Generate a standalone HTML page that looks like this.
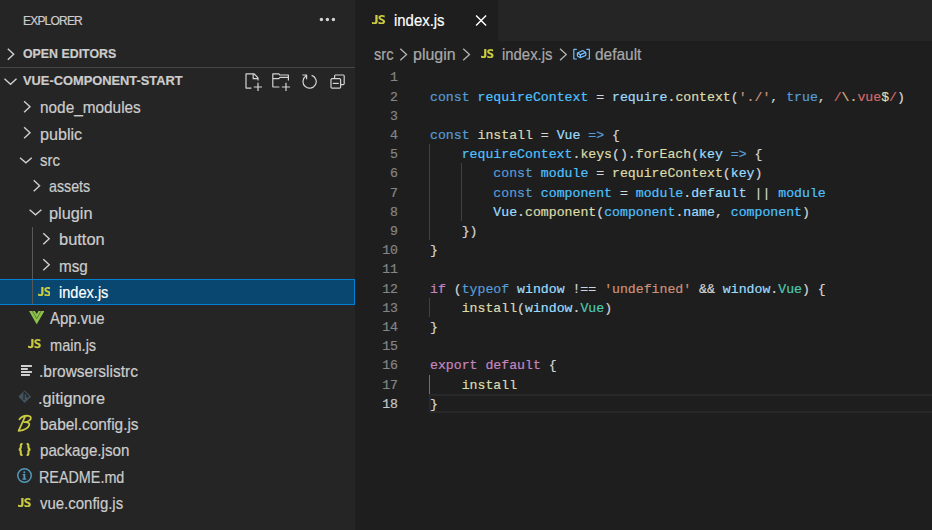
<!DOCTYPE html>
<html><head><meta charset="utf-8">
<style>
*{margin:0;padding:0;box-sizing:border-box}
html,body{width:932px;height:530px;overflow:hidden;background:#1e1e1e}
body{position:relative;font-family:"Liberation Sans",sans-serif;color:#cccccc;-webkit-text-stroke:0.2px currentColor}
.abs{position:absolute}
#side{position:absolute;left:0;top:0;width:355px;height:530px;background:#252526}
.row{position:absolute;left:0;width:355px;height:26.4px;line-height:26.4px;font-size:16.2px;color:#cccccc;white-space:nowrap}
.row .t{position:absolute;top:-0.7px}
.chev{position:absolute;width:19.2px;height:19.2px}
.hdr{position:absolute;left:0;width:355px;height:26.4px;line-height:26.4px;font-size:13.6px;font-weight:bold;color:#cccccc;white-space:nowrap}
svg{display:block}
#editor{position:absolute;left:355px;top:0;width:577px;height:530px;background:#1e1e1e}
#tabs{position:absolute;left:0;top:0;width:577px;height:41px;background:#252526}
#tab{position:absolute;left:0;top:0;width:143px;height:41px;background:#1e1e1e}
.code{position:absolute;left:0;top:0;font-family:"Liberation Mono",monospace;font-size:13.2px;white-space:pre}
.ln{position:absolute;height:19.2px;line-height:19.2px;font-family:"Liberation Mono",monospace;font-size:13.2px;color:#858585;text-align:right;width:43px;left:0}
.cl{position:absolute;left:75px;height:19.2px;line-height:19.2px;font-family:"Liberation Mono",monospace;font-size:13.2px;color:#d4d4d4;white-space:pre}
.k{color:#569cd6}.c{color:#4fc1ff}.f{color:#dcdcaa}.v{color:#9cdcfe}.s{color:#ce9178}.r{color:#d16969}.e{color:#d7ba7d}.ty{color:#4ec9b0}.p{color:#c586c0}
.js{position:absolute;font-weight:bold;color:#cbcb41;font-size:11.5px;letter-spacing:-0.6px;line-height:12px}
</style></head>
<body>
<div id="side">
  <div class="abs" style="left:23px;top:13px;font-size:12px;letter-spacing:-0.8px;line-height:16px;color:#cccccc">EXPLORER</div>
  <svg class="abs" style="left:316px;top:14px" width="22" height="11" viewBox="0 0 22 11"><circle cx="5.4" cy="5.5" r="1.7" fill="#d4d4d4"/><circle cx="11.4" cy="5.5" r="1.7" fill="#d4d4d4"/><circle cx="17.4" cy="5.5" r="1.7" fill="#d4d4d4"/></svg>

  <div class="hdr" style="top:42px">
    <svg class="abs" style="left:0;top:0;overflow:visible" width="1" height="1"><polyline fill="none" stroke="#d0d0d0" stroke-width="1.4" points="7.80,6.80 13.70,12.30 7.80,17.80"/></svg>
    <span class="abs" style="left:22.7px;top:-0.6px;transform-origin:0 50%;transform:scaleX(0.9093)">OPEN EDITORS</span>
  </div>
  <div class="abs" style="left:0;top:67px;width:355px;height:1px;background:#464646"></div>
  <div class="hdr" style="top:68.4px">
    <svg class="abs" style="left:0;top:0;overflow:visible" width="1" height="1"><polyline fill="none" stroke="#d0d0d0" stroke-width="1.4" points="4.50,10.80 10.50,16.20 16.50,10.80"/></svg>
    <span class="abs" style="left:23.0px;top:-0.2px;transform-origin:0 50%;transform:scaleX(0.9450)">VUE-COMPONENT-START</span>
    <svg class="abs" style="left:243px;top:3.6px" width="19.2" height="19.2" viewBox="0 0 16 16"><path fill="#d4d4d4" d="M9.5 1.1l3.4 3.5.1.4v2h-1V6H8V2H3v11h4v1H2.5l-.5-.5v-12l.5-.5h6.7l.3.1zM9 2v3h2.9L9 2zm4 14h-1v-3H9v-1h3V9h1v3h3v1h-3v3z"/></svg>
    <svg class="abs" style="left:271px;top:3.6px" width="19.2" height="19.2" viewBox="0 0 16 16"><path fill="#d4d4d4" d="M14.5 2H7.71l-.85-.85L6.51 1h-5l-.5.5v11l.5.5H7v-1H1.99V6h4.49l.35-.15.86-.86H14v1.5l-.001.51h1.011V2.5L14.5 2zm-.51 2h-6.5l-.35.15-.86.86H2v-3h4.29l.85.85.36.15H14l-.01.99zM13 16h-1v-3H9v-1h3V9h1v3h3v1h-3v3z"/></svg>
    <svg class="abs" style="left:299.8px;top:3.6px" width="19.2" height="19.2" viewBox="0 0 16 16"><path fill="#d4d4d4" d="M4.681 3H2V2h3.5l.5.5V6H5V4a5 5 0 1 0 4.53-.761l.302-.954A6 6 0 1 1 4.681 3z"/></svg>
    <svg class="abs" style="left:328px;top:3.6px" width="19.2" height="19.2" viewBox="0 0 16 16"><path fill="#d4d4d4" d="M9 9H4v1h5V9z"/><path fill="#d4d4d4" fill-rule="evenodd" d="M5 3l1-1h7l1 1v7l-1 1h-2v2l-1 1H3l-1-1V6l1-1h2V3zm1 2h4l1 1v4h2V3H6v2zm4 1H3v7h7V6z"/></svg>
  </div>

  <!-- tree rows -->
  <div class="row" style="top:94.80px;"><svg class="abs" style="left:0;top:0;overflow:visible" width="1" height="1"><polyline fill="none" stroke="#d0d0d0" stroke-width="1.4" points="24.10,6.20 30.00,11.70 24.10,17.20"/></svg><span class="t" style="left:39.51px;transform-origin:0 50%;transform:scaleX(0.9491);">node_modules</span></div>
<div class="row" style="top:121.20px;"><svg class="abs" style="left:0;top:0;overflow:visible" width="1" height="1"><polyline fill="none" stroke="#d0d0d0" stroke-width="1.4" points="24.10,6.20 30.00,11.70 24.10,17.20"/></svg><span class="t" style="left:39.50px;transform-origin:0 50%;transform:scaleX(0.9976);">public</span></div>
<div class="row" style="top:147.60px;"><svg class="abs" style="left:0;top:0;overflow:visible" width="1" height="1"><polyline fill="none" stroke="#d0d0d0" stroke-width="1.4" points="20.00,9.80 25.90,14.80 31.80,9.80"/></svg><span class="t" style="left:39.52px;transform-origin:0 50%;transform:scaleX(0.9238);">src</span></div>
<div class="row" style="top:174.00px;"><svg class="abs" style="left:0;top:0;overflow:visible" width="1" height="1"><polyline fill="none" stroke="#d0d0d0" stroke-width="1.4" points="33.70,6.20 39.60,11.70 33.70,17.20"/></svg><span class="t" style="left:48.77px;transform-origin:0 50%;transform:scaleX(0.8804);">assets</span></div>
<div class="row" style="top:200.40px;"><svg class="abs" style="left:0;top:0;overflow:visible" width="1" height="1"><polyline fill="none" stroke="#d0d0d0" stroke-width="1.4" points="29.60,9.80 35.50,14.80 41.40,9.80"/></svg><span class="t" style="left:49.40px;transform-origin:0 50%;transform:scaleX(1.0071);">plugin</span></div>
<div class="row" style="top:226.80px;"><svg class="abs" style="left:0;top:0;overflow:visible" width="1" height="1"><polyline fill="none" stroke="#d0d0d0" stroke-width="1.4" points="43.30,6.20 49.20,11.70 43.30,17.20"/></svg><span class="t" style="left:59.10px;transform-origin:0 50%;transform:scaleX(1.0156);">button</span></div>
<div class="row" style="top:253.20px;"><svg class="abs" style="left:0;top:0;overflow:visible" width="1" height="1"><polyline fill="none" stroke="#d0d0d0" stroke-width="1.4" points="43.30,6.20 49.20,11.70 43.30,17.20"/></svg><span class="t" style="left:59.10px;transform-origin:0 50%;transform:scaleX(0.94);">msg</span></div>
<div class="abs" style="left:-1px;top:279px;width:356px;height:26px;background:#094771;border:1px solid #007fd4"></div>
<div class="row" style="top:279.60px;"><svg class="abs" style="left:37.60px;top:7.00px" width="12.8" height="9.2" viewBox="0 0 13 9.3" preserveAspectRatio="none" fill="#cbcb41"><path d="M3.3 0H5.6V6.3C5.6 8.3 4.5 9.3 2.6 9.3 1.6 9.3 0.8 9.1 0 8.7V6.7C0.7 7.2 1.5 7.4 2.2 7.4 2.9 7.4 3.3 7 3.3 6.1Z"/><path d="M12.6 0.5V2.5C11.9 2 10.9 1.7 9.9 1.7 9 1.7 8.5 2 8.5 2.5 8.5 3.2 9.4 3.4 10.5 3.9 12 4.5 13 5.3 13 6.6 13 8.4 11.6 9.3 9.5 9.3 8.4 9.3 7.3 9.1 6.5 8.7V6.6C7.3 7.2 8.4 7.6 9.4 7.6 10.3 7.6 10.8 7.3 10.8 6.8 10.8 6.1 10 5.8 8.8 5.3 7.4 4.7 6.4 3.9 6.4 2.6 6.4 1 7.8 0 9.9 0 10.9 0 11.9 0.2 12.6 0.5Z"/></svg><span class="t" style="left:59.30px;transform-origin:0 50%;transform:scaleX(0.9);color:#ffffff;">index.js</span></div>
<div class="row" style="top:306.00px;"><svg class="abs" style="left:28.80px;top:4.80px" width="15.4" height="13.3" viewBox="0 0 261.76 226.69" preserveAspectRatio="none"><path fill="#8dc149" d="M0 0H100.6L130.9 52.4 161.1 0H261.8L130.9 226.7Z"/><polyline fill="none" stroke="#3f5a2a" stroke-width="11" points="56,0 130.9,130 205.8,0"/></svg><span class="t" style="left:49.67px;transform-origin:0 50%;transform:scaleX(0.92);">App.vue</span></div>
<div class="row" style="top:332.40px;"><svg class="abs" style="left:28.00px;top:7.00px" width="12.8" height="9.2" viewBox="0 0 13 9.3" preserveAspectRatio="none" fill="#cbcb41"><path d="M3.3 0H5.6V6.3C5.6 8.3 4.5 9.3 2.6 9.3 1.6 9.3 0.8 9.1 0 8.7V6.7C0.7 7.2 1.5 7.4 2.2 7.4 2.9 7.4 3.3 7 3.3 6.1Z"/><path d="M12.6 0.5V2.5C11.9 2 10.9 1.7 9.9 1.7 9 1.7 8.5 2 8.5 2.5 8.5 3.2 9.4 3.4 10.5 3.9 12 4.5 13 5.3 13 6.6 13 8.4 11.6 9.3 9.5 9.3 8.4 9.3 7.3 9.1 6.5 8.7V6.6C7.3 7.2 8.4 7.6 9.4 7.6 10.3 7.6 10.8 7.3 10.8 6.8 10.8 6.1 10 5.8 8.8 5.3 7.4 4.7 6.4 3.9 6.4 2.6 6.4 1 7.8 0 9.9 0 10.9 0 11.9 0.2 12.6 0.5Z"/></svg><span class="t" style="left:49.90px;transform-origin:0 50%;transform:scaleX(0.9);">main.js</span></div>
<div class="row" style="top:358.80px;"><svg class="abs" style="left:21.2px;top:6.20px" width="12" height="12" viewBox="0 0 12 12"><rect x="0" y="0" width="10.9" height="2" fill="#d0d0d0"/><rect x="0" y="3" width="6.8" height="2" fill="#d0d0d0"/><rect x="0" y="6" width="10.9" height="2" fill="#d0d0d0"/><rect x="0" y="9" width="8.9" height="2" fill="#d0d0d0"/></svg><span class="t" style="left:38.65px;transform-origin:0 50%;transform:scaleX(0.9559);">.browserslistrc</span></div>
<div class="row" style="top:385.20px;"><svg class="abs" style="left:17.6px;top:4.70px" width="13.4" height="13.2" viewBox="0 0 14 14"><path fill="#41535b" d="M7 0.2L13.8 7 7 13.8 0.2 7Z"/><path fill="none" stroke="#232526" stroke-width="1.2" d="M6.0 1.6L10.4 6.6M6.4 2.2L6.2 10.6"/><circle cx="9.9" cy="6.7" r="1.3" fill="#232526"/></svg><span class="t" style="left:38.49px;transform-origin:0 50%;transform:scaleX(1.0077);">.gitignore</span></div>
<div class="row" style="top:411.60px;"><svg class="abs" style="left:14px;top:0.40px" width="24" height="24" viewBox="0 0 24 24"><path fill="none" stroke="#cbcb41" stroke-width="1.8" stroke-linecap="round" stroke-linejoin="round" d="M5.4 7.2C7.5 4.5 11 3.6 14 3.8 17.5 4 17.5 6.8 15.5 8.4 14 9.6 12 10.2 10.4 10.2 14 10 16 11 15.2 13.2 14.2 15.8 10 18.2 4.8 18.8M10.9 5L4.6 18.9"/></svg><span class="t" style="left:39.61px;transform-origin:0 50%;transform:scaleX(0.9524);">babel.config.js</span></div>
<div class="row" style="top:438.00px;"><svg class="abs" style="left:18px;top:5.00px" width="14" height="13" viewBox="0 0 14 14" preserveAspectRatio="none" fill="none" stroke="#cbcb41" stroke-width="2.1"><path d="M4.6 0.9C2.6 0.9 2.8 2 2.8 4.4 2.8 6.2 2.4 6.8 0.9 7 2.4 7.2 2.8 7.8 2.8 9.6 2.8 12 2.6 13.1 4.6 13.1"/><path d="M8.6 0.9C10.6 0.9 10.4 2 10.4 4.4 10.4 6.2 10.8 6.8 12.3 7 10.8 7.2 10.4 7.8 10.4 9.6 10.4 12 10.6 13.1 8.6 13.1"/></svg><span class="t" style="left:39.61px;transform-origin:0 50%;transform:scaleX(0.9368);">package.json</span></div>
<div class="row" style="top:464.40px;"><svg class="abs" style="left:16.9px;top:3.70px" width="15" height="15" viewBox="0 0 15 15"><circle cx="7.5" cy="7.5" r="6.75" fill="none" stroke="#519aba" stroke-width="1.5"/><circle cx="7.3" cy="4.2" r="1.0" fill="#519aba"/><path fill="#519aba" d="M5.6 6.0H8.3V10.6H9.3V11.8H5.4V10.6H6.4V7.2H5.6Z"/></svg><span class="t" style="left:39.00px;transform-origin:0 50%;transform:scaleX(0.8865);">README.md</span></div>
<div class="row" style="top:490.80px;"><svg class="abs" style="left:18.40px;top:7.00px" width="12.8" height="9.2" viewBox="0 0 13 9.3" preserveAspectRatio="none" fill="#cbcb41"><path d="M3.3 0H5.6V6.3C5.6 8.3 4.5 9.3 2.6 9.3 1.6 9.3 0.8 9.1 0 8.7V6.7C0.7 7.2 1.5 7.4 2.2 7.4 2.9 7.4 3.3 7 3.3 6.1Z"/><path d="M12.6 0.5V2.5C11.9 2 10.9 1.7 9.9 1.7 9 1.7 8.5 2 8.5 2.5 8.5 3.2 9.4 3.4 10.5 3.9 12 4.5 13 5.3 13 6.6 13 8.4 11.6 9.3 9.5 9.3 8.4 9.3 7.3 9.1 6.5 8.7V6.6C7.3 7.2 8.4 7.6 9.4 7.6 10.3 7.6 10.8 7.3 10.8 6.8 10.8 6.1 10 5.8 8.8 5.3 7.4 4.7 6.4 3.9 6.4 2.6 6.4 1 7.8 0 9.9 0 10.9 0 11.9 0.2 12.6 0.5Z"/></svg><span class="t" style="left:39.60px;transform-origin:0 50%;transform:scaleX(0.9242);">vue.config.js</span></div>
<div class="abs" style="left:32px;top:226.80px;width:1px;height:52.20px;background:#585858"></div>
<div class="abs" style="left:32px;top:280px;width:1px;height:24px;background:#585858"></div>
</div>

<div id="editor">
  <div id="tabs">
    <div id="tab">
      <svg class="abs" style="left:17.00px;top:14.80px" width="13.1" height="9.3" viewBox="0 0 13 9.3" preserveAspectRatio="none" fill="#cbcb41"><path d="M3.3 0H5.6V6.3C5.6 8.3 4.5 9.3 2.6 9.3 1.6 9.3 0.8 9.1 0 8.7V6.7C0.7 7.2 1.5 7.4 2.2 7.4 2.9 7.4 3.3 7 3.3 6.1Z"/><path d="M12.6 0.5V2.5C11.9 2 10.9 1.7 9.9 1.7 9 1.7 8.5 2 8.5 2.5 8.5 3.2 9.4 3.4 10.5 3.9 12 4.5 13 5.3 13 6.6 13 8.4 11.6 9.3 9.5 9.3 8.4 9.3 7.3 9.1 6.5 8.7V6.6C7.3 7.2 8.4 7.6 9.4 7.6 10.3 7.6 10.8 7.3 10.8 6.8 10.8 6.1 10 5.8 8.8 5.3 7.4 4.7 6.4 3.9 6.4 2.6 6.4 1 7.8 0 9.9 0 10.9 0 11.9 0.2 12.6 0.5Z"/></svg>
      <div class="abs" style="left:39px;top:-0.7px;height:42px;line-height:42px;font-size:16.2px;color:#ffffff;transform-origin:0 50%;transform:scaleX(0.921)">index.js</div>
      <svg class="abs" style="left:118px;top:13px" width="15" height="15" viewBox="0 0 15 15"><path fill="none" stroke="#ffffff" stroke-width="1.45" d="M3.1 2.6L13.1 12.6M13.1 2.6L3.1 12.6"/></svg>
    </div>
  </div>
  <div id="crumbs" class="abs" style="left:0;top:42px;width:577px;height:26.4px;font-size:16.2px;line-height:26.4px;color:#a9a9a9;white-space:nowrap"><span class="abs" style="left:19px;top:-0.7px;transform-origin:0 50%;transform:scaleX(0.90)">src</span>
<svg class="abs" style="left:0;top:0;overflow:visible" width="1" height="1"><polyline fill="none" stroke="#b4b4b4" stroke-width="1.3" points="45.30,6.70 51.60,12.45 45.30,18.20"/></svg>
<span class="abs" style="left:58px;top:-0.7px;transform-origin:0 50%;transform:scaleX(0.986)">plugin</span>
<svg class="abs" style="left:0;top:0;overflow:visible" width="1" height="1"><polyline fill="none" stroke="#b4b4b4" stroke-width="1.3" points="108.20,6.70 114.50,12.45 108.20,18.20"/></svg>
<svg class="abs" style="left:126.10px;top:7.00px" width="12.5" height="9.2" viewBox="0 0 13 9.3" preserveAspectRatio="none" fill="#cbcb41"><path d="M3.3 0H5.6V6.3C5.6 8.3 4.5 9.3 2.6 9.3 1.6 9.3 0.8 9.1 0 8.7V6.7C0.7 7.2 1.5 7.4 2.2 7.4 2.9 7.4 3.3 7 3.3 6.1Z"/><path d="M12.6 0.5V2.5C11.9 2 10.9 1.7 9.9 1.7 9 1.7 8.5 2 8.5 2.5 8.5 3.2 9.4 3.4 10.5 3.9 12 4.5 13 5.3 13 6.6 13 8.4 11.6 9.3 9.5 9.3 8.4 9.3 7.3 9.1 6.5 8.7V6.6C7.3 7.2 8.4 7.6 9.4 7.6 10.3 7.6 10.8 7.3 10.8 6.8 10.8 6.1 10 5.8 8.8 5.3 7.4 4.7 6.4 3.9 6.4 2.6 6.4 1 7.8 0 9.9 0 10.9 0 11.9 0.2 12.6 0.5Z"/></svg>
<span class="abs" style="left:147px;top:-0.7px;transform-origin:0 50%;transform:scaleX(0.92)">index.js</span>
<svg class="abs" style="left:0;top:0;overflow:visible" width="1" height="1"><polyline fill="none" stroke="#b4b4b4" stroke-width="1.3" points="205.00,6.70 211.30,12.45 205.00,18.20"/></svg>
<svg class="abs" style="left:217px;top:1.6px" width="19.2" height="19.2" viewBox="0 0 16 16"><path fill="#75beff" d="M2 5h2V4H1.5l-.5.5v8l.5.5H4v-1H2V5zm12.5-1H12v1h2v7h-2v1h2.5l.5-.5v-8l-.5-.5zm-2.74 2.57L12 7v2.51l-.3.45-4.5 2h-.46l-2.5-1.5-.24-.43v-2.5l.3-.46 4.5-2h.46l2.5 1.5zM5 9.71l1.5.9V9.28L5 8.38v1.33zm.58-2.15l1.45.87 3.39-1.5-1.45-.87-3.39 1.5zm1.95 3.17l3.5-1.56v-1.4l-3.5 1.55v1.41z"/></svg>
<span class="abs" style="left:240px;top:-0.7px;transform-origin:0 50%;transform:scaleX(0.955)">default</span></div>
  <div id="lines" class="abs" style="left:0;top:68.4px;width:577px;height:462px"><div class="abs" style="left:74px;top:326.00px;width:503px;height:19px;border:2px solid #282828;border-right:none"></div>
<div class="abs" style="left:74px;top:75.80px;width:1px;height:96.00px;background:#404040"></div>
<div class="abs" style="left:105.7px;top:95.00px;width:1px;height:57.60px;background:#404040"></div>
<div class="abs" style="left:74px;top:229.40px;width:1px;height:19.20px;background:#404040"></div>
<div class="abs" style="left:74px;top:306.20px;width:1px;height:19.20px;background:#707070"></div>
<div class="ln" style="top:0.00px;color:#858585">1</div>
<div class="ln" style="top:19.20px;color:#858585">2</div>
<div class="cl" style="top:19.20px"><span class="k">const</span> <span class="c">requireContext</span> = <span class="v">require</span>.<span class="f">context</span>(<span class="s">'./'</span>, <span class="k">true</span>, <span class="r">/</span><span class="e">\.</span><span class="r">vue</span><span class="f">$</span><span class="r">/</span>)</div>
<div class="ln" style="top:38.40px;color:#858585">3</div>
<div class="ln" style="top:57.60px;color:#858585">4</div>
<div class="cl" style="top:57.60px"><span class="k">const</span> <span class="f">install</span> = <span class="v">Vue</span> <span class="k">=&gt;</span> {</div>
<div class="ln" style="top:76.80px;color:#858585">5</div>
<div class="cl" style="top:76.80px">    <span class="c">requireContext</span>.<span class="f">keys</span>().<span class="f">forEach</span>(<span class="v">key</span> <span class="k">=&gt;</span> {</div>
<div class="ln" style="top:96.00px;color:#858585">6</div>
<div class="cl" style="top:96.00px">        <span class="k">const</span> <span class="c">module</span> = <span class="f">requireContext</span>(<span class="v">key</span>)</div>
<div class="ln" style="top:115.20px;color:#858585">7</div>
<div class="cl" style="top:115.20px">        <span class="k">const</span> <span class="c">component</span> = <span class="c">module</span>.<span class="v">default</span> || <span class="c">module</span></div>
<div class="ln" style="top:134.40px;color:#858585">8</div>
<div class="cl" style="top:134.40px">        <span class="v">Vue</span>.<span class="f">component</span>(<span class="c">component</span>.<span class="v">name</span>, <span class="c">component</span>)</div>
<div class="ln" style="top:153.60px;color:#858585">9</div>
<div class="cl" style="top:153.60px">    })</div>
<div class="ln" style="top:172.80px;color:#858585">10</div>
<div class="cl" style="top:172.80px">}</div>
<div class="ln" style="top:192.00px;color:#858585">11</div>
<div class="ln" style="top:211.20px;color:#858585">12</div>
<div class="cl" style="top:211.20px"><span class="p">if</span> (<span class="k">typeof</span> <span class="v">window</span> !== <span class="s">'undefined'</span> &amp;&amp; <span class="v">window</span>.<span class="ty">Vue</span>) {</div>
<div class="ln" style="top:230.40px;color:#858585">13</div>
<div class="cl" style="top:230.40px">    <span class="f">install</span>(<span class="v">window</span>.<span class="ty">Vue</span>)</div>
<div class="ln" style="top:249.60px;color:#858585">14</div>
<div class="cl" style="top:249.60px">}</div>
<div class="ln" style="top:268.80px;color:#858585">15</div>
<div class="ln" style="top:288.00px;color:#858585">16</div>
<div class="cl" style="top:288.00px"><span class="p">export</span> <span class="p">default</span> {</div>
<div class="ln" style="top:307.20px;color:#858585">17</div>
<div class="cl" style="top:307.20px">    <span class="f">install</span></div>
<div class="ln" style="top:326.40px;color:#c6c6c6">18</div>
<div class="cl" style="top:326.40px">}</div></div>
</div>
</body></html>
